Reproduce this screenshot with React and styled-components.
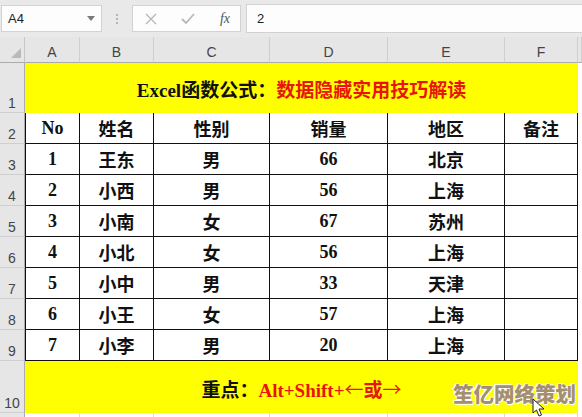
import React from 'react';
import styled, { createGlobalStyle } from 'styled-components';

const GlobalStyle = createGlobalStyle`
  html, body {
    margin: 0;
    padding: 0;
    background: #ffffff;
    overflow: hidden;
  }
  #root {
    width: 582px;
    height: 417px;
  }
`;

const COLS = '25px 55px 74px 116px 118px 117px 73px 4px';

const Page = styled.div`
  position: relative;
  width: 582px;
  height: 417px;
  overflow: hidden;
  background: #ffffff;
  font-family: 'Liberation Serif', 'Noto Sans CJK SC', serif;
`;

const FormulaBar = styled.div`
  display: flex;
  align-items: center;
  height: 37px;
  padding: 0 0 0 1px;
  background: #e9e9e9;
  box-sizing: border-box;
  font-family: 'Liberation Sans', 'Noto Sans', sans-serif;
`;

const NameBox = styled.div`
  display: flex;
  align-items: center;
  justify-content: space-between;
  width: 101px;
  height: 27px;
  padding: 0 6px 0 6px;
  box-sizing: border-box;
  background: #fdfdfd;
  border: 1px solid #d2d2d2;
  font-size: 13px;
  color: #222;
`;

const Dots = styled.div`
  display: flex;
  flex-direction: column;
  gap: 2px;
  margin: 0 14px 0 14px;
  span {
    width: 2px;
    height: 2px;
    background: #b5b5b5;
  }
`;

const FxBox = styled.div`
  display: flex;
  align-items: center;
  justify-content: space-between;
  width: 109px;
  height: 27px;
  padding: 0 10px 0 12px;
  box-sizing: border-box;
  background: #fdfdfd;
  border: 1px solid #d2d2d2;
  color: #b0b0b0;
`;

const Fx = styled.span`
  font-family: 'Liberation Serif', serif;
  font-style: italic;
  font-size: 14px;
  color: #555;
`;

const Input = styled.div`
  display: flex;
  align-items: center;
  flex: 1;
  height: 27px;
  margin-left: 5px;
  padding-left: 10px;
  background: #fdfdfd;
  border: 1px solid #d2d2d2;
  border-right: none;
  font-size: 13px;
  color: #222;
`;

const Row = styled.div`
  display: grid;
  grid-template-columns: ${COLS};
  height: ${(p) => p.$h}px;
`;

const Corner = styled.div`
  background: #e6e6e6;
  border-right: 1px solid #c6c6c6;
  border-bottom: 1px solid #ababab;
  box-sizing: border-box;
  display: flex;
  align-items: flex-end;
  justify-content: flex-end;
  padding: 0 3px 4px 0;
`;

const ColHead = styled.div`
  display: flex;
  align-items: flex-end;
  justify-content: center;
  padding-bottom: 2px;
  background: #e6e6e6;
  border-right: 1px solid #cfcfcf;
  border-bottom: 1px solid #ababab;
  box-sizing: border-box;
  font-family: 'Liberation Sans', 'Noto Sans', sans-serif;
  font-size: 14px;
  color: #444;
`;

const RowHead = styled.div`
  display: flex;
  align-items: flex-end;
  justify-content: center;
  padding-bottom: 1px;
  background: #e6e6e6;
  border-right: 1px solid #ababab;
  border-bottom: 1px solid #cfcfcf;
  box-sizing: border-box;
  font-family: 'Liberation Sans', 'Noto Sans', sans-serif;
  font-size: 14px;
  color: #444;
`;

const Banner = styled.div`
  grid-column: 2 / 8;
  display: flex;
  align-items: center;
  justify-content: center;
  background: #ffff00;
  font-weight: bold;
  font-size: ${(p) => p.$size}px;
  color: #111;
  padding-top: ${(p) => p.$pad}px;
  box-sizing: border-box;
`;

const Red = styled.span`
  color: #e8150c;
`;

const Arrow = styled.span`
  font-family: 'Noto Sans CJK SC', sans-serif;
  font-weight: normal;
`;

const Cell = styled.div`
  display: flex;
  align-items: center;
  justify-content: center;
  border-right: 1px solid #111;
  border-bottom: 1px solid #111;
  border-left: ${(p) => (p.$first ? '1px solid #111' : 'none')};
  box-sizing: border-box;
  font-weight: bold;
  font-size: 18px;
  color: #111;
  background: #fff;
`;

const Blank = styled.div`
  border-right: 1px solid #dadada;
  box-sizing: border-box;
  background: #fff;
`;

const Filler = styled.div`
  background: #fff;
`;

const Watermark = styled.div`
  position: absolute;
  right: 6px;
  bottom: 9px;
  font-family: 'Noto Sans CJK SC', sans-serif;
  font-weight: 900;
  font-size: 20.5px;
  color: #a58f72;
  -webkit-text-stroke: 0.6px #fff;
  paint-order: stroke fill;
  text-shadow: 0 0 1px #fff, 1px 1px 0 #fff, -1px -1px 0 #fff;
`;

const Cursor = styled.svg`
  position: absolute;
  left: 532px;
  top: 398px;
`;

const rows = [
  ['1', '王东', '男', '66', '北京'],
  ['2', '小西', '男', '56', '上海'],
  ['3', '小南', '女', '67', '苏州'],
  ['4', '小北', '女', '56', '上海'],
  ['5', '小中', '男', '33', '天津'],
  ['6', '小王', '女', '57', '上海'],
  ['7', '小李', '男', '20', '上海'],
];

const DataRow = ({ num, values }) => (
  <Row $h={31}>
    <RowHead>{num}</RowHead>
    {values.map((v, i) => (
      <Cell key={i} $first={i === 0}>
        {v}
      </Cell>
    ))}
    <Filler />
  </Row>
);

export default function App() {
  return (
    <Page>
      <GlobalStyle />
      <FormulaBar>
        <NameBox>
          <span>A4</span>
          <svg width="8" height="5" viewBox="0 0 8 5">
            <path d="M0 0 L8 0 L4 5 Z" fill="#7a7a7a" />
          </svg>
        </NameBox>
        <Dots>
          <span />
          <span />
          <span />
        </Dots>
        <FxBox>
          <svg width="12" height="12" viewBox="0 0 12 12">
            <path d="M1 1 L11 11 M11 1 L1 11" stroke="#b8b8b8" strokeWidth="1.4" />
          </svg>
          <svg width="14" height="12" viewBox="0 0 14 12">
            <path d="M1 6 L5 10 L13 1" stroke="#b8b8b8" strokeWidth="1.8" fill="none" />
          </svg>
          <Fx>fx</Fx>
        </FxBox>
        <Input>2</Input>
      </FormulaBar>

      <Row $h={26}>
        <Corner>
          <svg width="10" height="10" viewBox="0 0 10 10">
            <path d="M10 0 L10 10 L0 10 Z" fill="#b9b9b9" />
          </svg>
        </Corner>
        {['A', 'B', 'C', 'D', 'E', 'F'].map((c) => (
          <ColHead key={c}>{c}</ColHead>
        ))}
        <ColHead />
      </Row>

      <Row $h={50}>
        <RowHead>1</RowHead>
        <Banner $size={19} $pad={0}>
          Excel函数公式：<Red>数据隐藏实用技巧解读</Red>
        </Banner>
        <Filler />
      </Row>

      <DataRow num="2" values={['No', '姓名', '性别', '销量', '地区', '备注']} />
      {rows.map((r, i) => (
        <DataRow key={i} num={String(i + 3)} values={[...r, '']} />
      ))}

      <Row $h={52}>
        <RowHead>10</RowHead>
        <Banner $size={19} $pad={2}>
          重点：
          <Red>
            Alt+Shift+<Arrow>←</Arrow>或<Arrow>→</Arrow>
          </Red>
        </Banner>
        <Filler />
      </Row>

      <Row $h={10}>
        <RowHead />
        <Blank />
        <Blank />
        <Blank />
        <Blank />
        <Blank />
        <Blank />
        <Filler />
      </Row>

      <Watermark>笙亿网络策划</Watermark>
      <Cursor width="16" height="20" viewBox="0 0 16 20">
        <path d="M1 1 L1 15 L4.5 12 L7 18 L9.5 17 L7 11 L12 11 Z" fill="#fff" stroke="#222" strokeWidth="1" />
      </Cursor>
    </Page>
  );
}
